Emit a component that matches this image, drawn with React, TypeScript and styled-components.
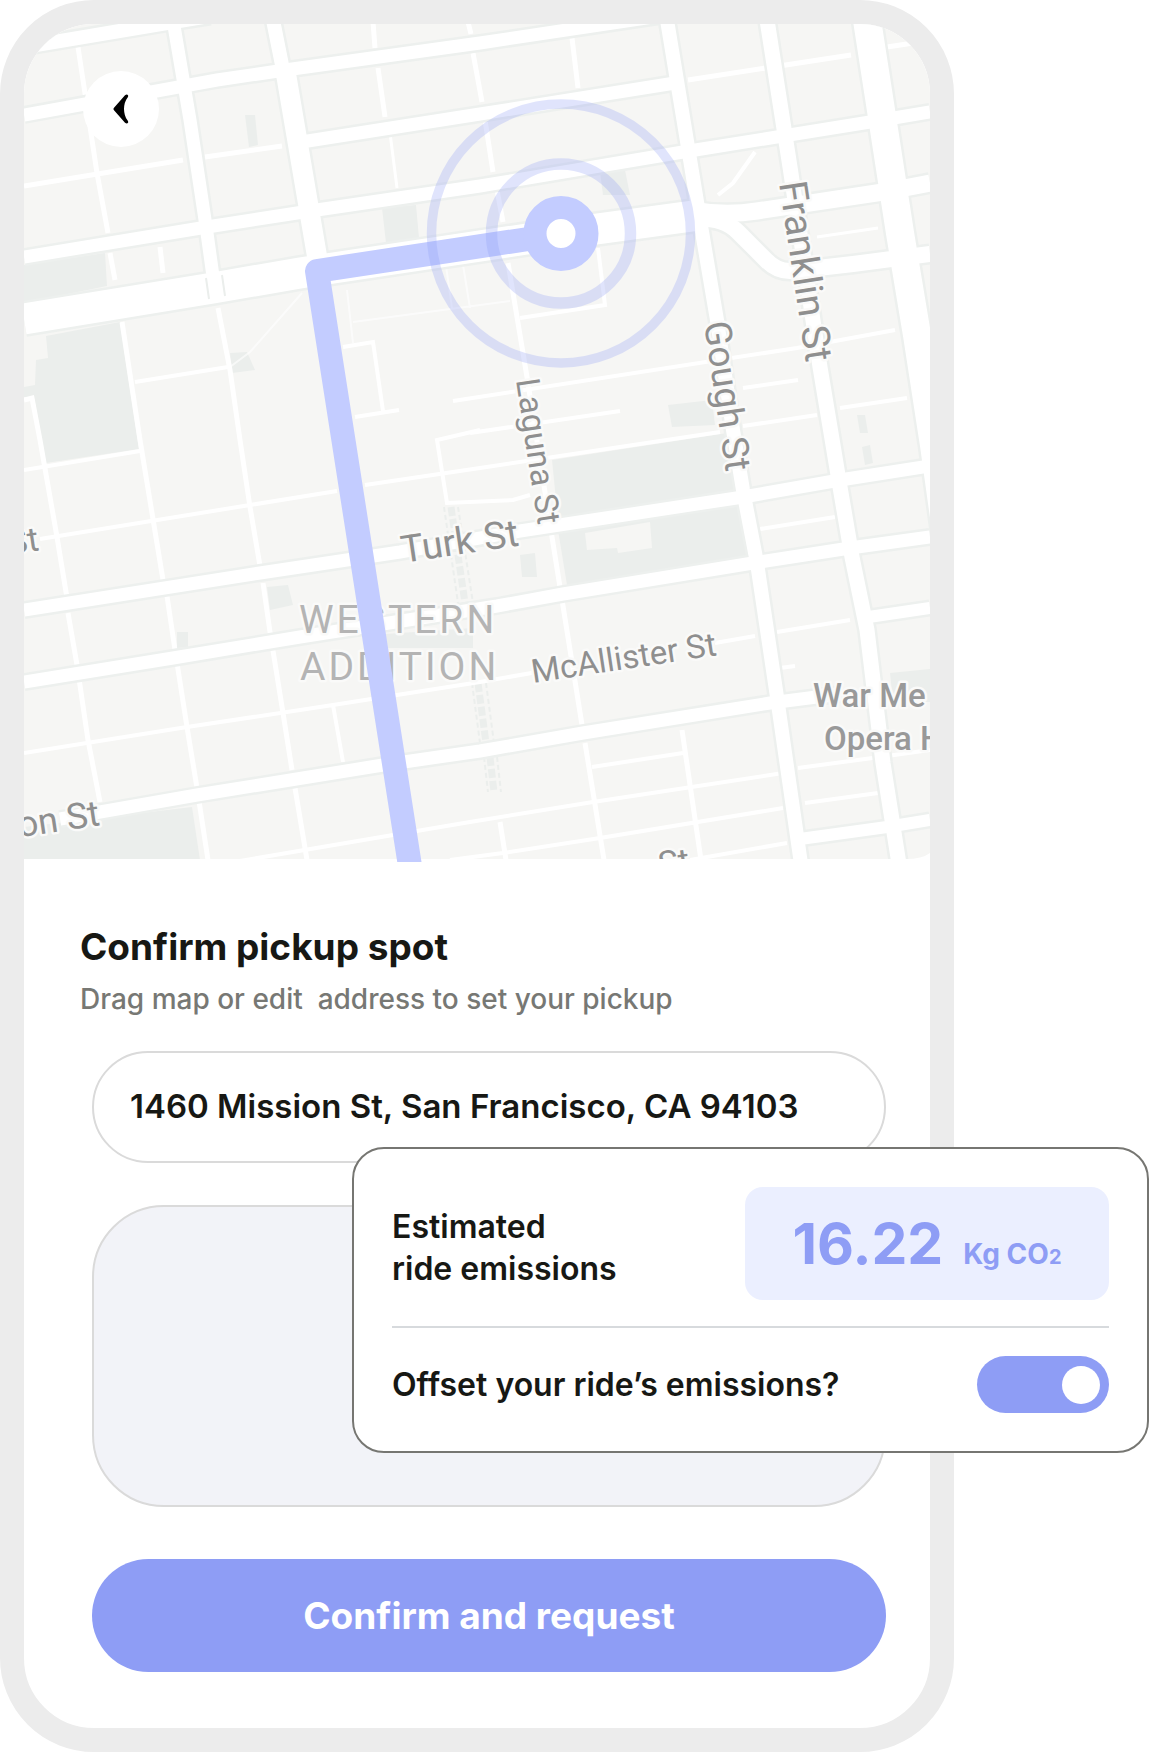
import React, { useState } from "react";
import styled, { createGlobalStyle } from "styled-components";

const color = {
  ink: "#171814",
  muted: "#777874",
  frame: "#ececec",
  line: "#dadada",
  panel: "#f2f3f8",
  accent: "#8e9df5",
  accentSoft: "#ebefff",
  route: "#c3ccff",
  land: "#f6f6f4",
  park: "#ebeeec",
};

const GlobalStyle = createGlobalStyle`
  *, *::before, *::after { box-sizing: border-box; }
  body { margin: 0; background: #fff; color: ${color.ink}; font-family: Inter, "Liberation Sans", sans-serif; }
  h1, p { margin: 0; }
`;

const Page = styled.main`
  padding-right: 196px;
`;

const Phone = styled.div`
  border: 24px solid ${color.frame};
  border-radius: 94px;
  background: #fff;
`;

const MapArea = styled.section`
  position: relative;
  border-radius: 70px 70px 0 0;
  overflow: hidden;
`;

const MapDrawing = styled.svg`
  display: block;
  width: 100%;
  height: auto;
`;

const BackButton = styled.button`
  position: absolute;
  left: 59px;
  top: 47px;
  width: 76px;
  height: 76px;
  display: flex;
  align-items: center;
  justify-content: center;
  padding: 0;
  border: 0;
  border-radius: 50%;
  background: #fff;
  cursor: pointer;
`;

const Heading = styled.header`
  display: flex;
  flex-direction: column;
  gap: 10px;
  padding: 61px 56px 0;
`;

const Title = styled.h1`
  font-size: 37px;
  line-height: 48px;
  font-weight: 700;
`;

const Hint = styled.label`
  font-size: 28px;
  line-height: 36px;
  font-weight: 500;
  color: ${color.muted};
  white-space: pre-wrap;
`;

const Form = styled.form`
  display: flex;
  flex-direction: column;
  padding: 34px 44px 56px 68px;
`;

const AddressInput = styled.input`
  width: 100%;
  height: 112px;
  padding: 0 36px 2px;
  border: 2px solid ${color.line};
  border-radius: 57px;
  background: #fff;
  color: inherit;
  font: 600 33px/42px Inter, "Liberation Sans", sans-serif;
`;

const Panel = styled.div`
  position: relative;
  height: 302px;
  margin: 42px 0 52px;
  border: 2px solid ${color.line};
  border-radius: 72px;
  background: ${color.panel};
`;

const SubmitButton = styled.button`
  height: 113px;
  border: 0;
  border-radius: 57px;
  background: ${color.accent};
  color: #fff;
  font: 700 37px/48px Inter, "Liberation Sans", sans-serif;
  cursor: pointer;
`;

const Card = styled.div`
  position: absolute;
  left: 258px;
  right: -265px;
  top: -60px;
  padding: 38px;
  border: 2px solid #767672;
  border-radius: 32px;
  background: #fff;
`;

const CardRow = styled.div<{ $divided?: boolean }>`
  display: flex;
  align-items: center;
  justify-content: space-between;
  padding: ${(p) => (p.$divided ? "0 0 26px" : "28px 0 0")};
  border-bottom: ${(p) => (p.$divided ? "2px solid #d7dadd" : "0")};
`;

const CardLabel = styled.label<{ $stacked?: boolean }>`
  padding-top: ${(p) => (p.$stacked ? "8px" : "0")};
  font-size: 32px;
  line-height: 42px;
  font-weight: 600;
`;

const Amount = styled.output`
  display: flex;
  align-items: center;
  justify-content: center;
  width: 364px;
  height: 113px;
  border-radius: 18px;
  background: ${color.accentSoft};
  color: ${color.accent};
`;

const AmountText = styled.span`
  display: flex;
  align-items: baseline;
  gap: 20px;
`;

const Value = styled.span`
  font-size: 57px;
  line-height: 64px;
  font-weight: 700;
`;

const Unit = styled.span`
  font-size: 28px;
  line-height: 36px;
  font-weight: 700;

  sub {
    font-size: 20px;
    line-height: 0;
    vertical-align: baseline;
  }
`;

const Switch = styled.input`
  appearance: none;
  display: flex;
  align-items: center;
  width: 132px;
  height: 57px;
  margin: 0;
  padding: 0 9px;
  border-radius: 29px;
  background: #c9cbd3;
  cursor: pointer;

  &::before {
    content: "";
    width: 38px;
    height: 38px;
    border-radius: 50%;
    background: #fff;
  }

  &:checked {
    justify-content: flex-end;
    background: ${color.accent};
  }
`;

const StreetName = styled.text`
  font-family: Roboto, "Liberation Sans", sans-serif;
  fill: #8f8f8f;
  stroke: #fafaf9;
  stroke-width: 5px;
  stroke-linejoin: round;
  paint-order: stroke;
`;

const DistrictName = styled(StreetName)`
  font-size: 39px;
  font-weight: 400;
  letter-spacing: 3px;
  fill: #b4b4b4;
`;

const PlaceName = styled(StreetName)`
  font-size: 33px;
  font-weight: 500;
  fill: #999;
`;

const parks = [
  "M24 265L105 253L107 286L24 303Z",
  "M46 336L120 322L139 449L46 463L34 397H24V387L35 385L36 360L48 358Z",
  "M24 827L192 807L200 860H24Z",
  "M552 460L727 433L735 490L558 520Z",
  "M558 530L738 503L747 558L567 585Z",
  "M382 208L416 205L419 238L386 243Z",
  "M245 115H255L258 145L249 147Z",
  "M230 353L247 352L255 370L232 373Z",
  "M600 172L625 170L630 195H603Z",
  "M668 405L712 400L715 425L672 427Z",
  "M857 415H865L868 433H860Z",
  "M862 447L870 445L873 463L865 465Z",
  "M267 587L288 585L293 605L270 610Z",
  "M177 632H188V647L177 648Z",
  "M520 555L535 553L537 577H522Z",
  "M890 673L930 669V702H893Z",
  "M385 634L473 628V648H388Z",
];

const roads: { d: string; w: number }[] = [
  { w: 14, d: "M24 47L167 23L210 16" },
  { w: 13, d: "M24 115L217 80L285 70L480 43L660 16" },
  { w: 13, d: "M295 143L480 114L675 83" },
  { w: 13, d: "M24 257L207 227L310 211L480 186L683 152L870 122L930 112" },
  { w: 31, d: "M24 319L213 288L300 273L560 234L700 215" },
  { w: 17, d: "M690 210Q725 216 757 211L883 192L930 183" },
  { w: 16, d: "M690 219Q722 216 738 232L766 260Q777 272 792 271L853 264L930 254" },
  { w: 13, d: "M24 610L260 573L400 552L520 531L743 497L840 480L930 466" },
  { w: 13, d: "M24 682L173 658L300 637L497 606L563 594L753 563L850 548L930 537" },
  { w: 12, d: "M862 618L930 608" },
  { w: 13, d: "M60 819L100 812L197 795L383 765L480 751L583 733L770 703L840 694" },
  { w: 12, d: "M800 839L887 827L930 820" },
  { w: 13, d: "M173 20L190 120L207 233L216 298" },
  { w: 14, d: "M273 20L285 80" },
  { w: 20, d: "M286 74L310 215L318 262" },
  { w: 14, d: "M667 20L683 117L700 220L717 320L733 430L743 490L757 563L777 697L801 864" },
  { w: 15, d: "M767 20L790 167L820 367L840 487L852 557L867 630L883 763L899 864" },
  { w: 28, d: "M867 20L883 123L900 233L917 335L934 445L950 560" },
];

const lanes: { d: string; w: number }[] = [
  { w: 5, d: "M24 186L183 160M205 157L282 146M688 80L851 55M887 47L920 42" },
  { w: 5, d: "M78 47L97 173L108 233M110 253L115 280M160 247L163 273" },
  { w: 5, d: "M218 308L230 370L240 440L250 507L260 566M263 583L270 632L283 713L292 770M295 788L307 860" },
  { w: 5, d: "M122 322L140 440L152 513L163 580M167 596L175 650L187 727L197 788L208 860" },
  { w: 5, d: "M24 400L32 398L40 440L57 537L67 598M68 613L77 665L88 740L100 802" },
  { w: 4, d: "M24 470L140 451M40 539L250 505L337 491M365 485L480 468L720 432M743 426L817 415M840 408L907 398" },
  { w: 4, d: "M135 382L228 367" },
  { w: 5, d: "M373 22L375 48M378 68L385 117M468 22L471 34M473 53L482 102M485 120L493 172M497 190L503 222M572 38L578 88" },
  { w: 3, d: "M390 133L397 188M878 228L817 237" },
  { w: 5, d: "M508 263L527 377L552 537L582 725M585 743L604 860M682 730L701 860M500 822L506 860" },
  { w: 4, d: "M598 248L605 305L520 318M755 152L733 183L718 195" },
  { w: 4, d: "M343 347L373 342L383 411M355 417L399 410" },
  { w: 4, d: "M453 401L797 348L895 330M470 433L620 411M743 388L798 380" },
  { w: 4, d: "M480 430L437 440L447 503L513 500L530 495" },
  { w: 4, d: "M760 529L835 517M780 668L795 666M715 643L755 636M777 632L850 620M857 619L910 610" },
  { w: 4, d: "M24 753L187 727L333 705L480 682L560 668M333 705L343 762" },
  { w: 4, d: "M240 861L393 835L470 822L593 802L783 773M798 768L880 757L930 750" },
  { w: 4, d: "M450 860L503 853L600 838L783 808M805 803L878 793M690 860L787 843M592 767L683 753" },
];

function MapView() {
  return (
    <MapDrawing viewBox="24 24 906 838" role="img" aria-label="Map of the pickup spot near Laguna St">
      <defs>
        <clipPath id="map-tiles">
          <path d="M24 24H930V853Q922 859 906 859H24Z" />
        </clipPath>
      </defs>
      <g clipPath="url(#map-tiles)">
        <rect x="24" y="24" width="906" height="838" fill={color.land} />
        {parks.map((d) => (
          <path key={d} d={d} fill={color.park} />
        ))}
        <path d="M585 533L650 522L652 548L618 553L617 548L587 550Z" fill={color.land} />
        <g fill="none" stroke={color.park}>
          <path strokeWidth="7" strokeDasharray="9 3" d="M451 507L465 603M478 683L486 743M490 757L494 792" />
          <path strokeWidth="2" strokeDasharray="5 3" d="M444 507L458 603M458 507L473 603M472 683L480 743M486 683L494 743M484 757L488 792M497 757L501 792" />
        </g>
        <g fill="none" stroke="#fff" strokeWidth="2" opacity="0.6">
          <path d="M302 293L250 352L230 367M347 290L353 343M353 322L510 301M463 265L470 308M446 266L452 308" />
        </g>
        <g fill="none" stroke="#fff">
          {lanes.map((l) => (
            <path key={l.d} d={l.d} strokeWidth={l.w} />
          ))}
        </g>
        <g fill="none" stroke="#edf0ee">
          {roads.map((r) => (
            <path key={r.d} d={r.d} strokeWidth={r.w + 5} />
          ))}
        </g>
        <g fill="none" stroke="#fff">
          {roads.map((r) => (
            <path key={r.d} d={r.d} strokeWidth={r.w} />
          ))}
        </g>
        <path d="M206 278L209 299M222 275L225 296" stroke={color.park} strokeWidth="2" />
        <StreetName fontSize="38" transform="translate(403 563) rotate(-8.6)">Turk St</StreetName>
        <StreetName fontSize="33" transform="translate(533 683) rotate(-8.6)">McAllister St</StreetName>
        <StreetName fontSize="33" transform="translate(516 380) rotate(81.4)">Laguna St</StreetName>
        <StreetName fontSize="37" transform="translate(704 323) rotate(81.6)">Gough St</StreetName>
        <StreetName fontSize="39" transform="translate(779 183) rotate(81.4)">Franklin St</StreetName>
        <StreetName fontSize="36" textAnchor="end" transform="translate(101 825) rotate(-8.6)">on St</StreetName>
        <StreetName fontSize="34" textAnchor="end" transform="translate(40 550) rotate(-8.6)">St</StreetName>
        <StreetName fontSize="34" transform="translate(660 876) rotate(-8.6)">St</StreetName>
        <DistrictName x="299" y="633">WESTERN</DistrictName>
        <DistrictName x="300" y="680">ADDITION</DistrictName>
        <PlaceName x="813" y="707">War Me</PlaceName>
        <PlaceName x="824" y="750">Opera H</PlaceName>
      </g>
      <path d="M561 234L317 271L410 866" fill="none" stroke={color.route} strokeWidth="24" strokeLinejoin="round" />
      <g fill="none" stroke={color.accent} opacity="0.27">
        <circle cx="561" cy="233.5" r="129.5" strokeWidth="9.5" />
        <circle cx="561" cy="233.5" r="69.5" strokeWidth="11.5" />
      </g>
      <circle cx="561" cy="233.5" r="26" fill="#fff" stroke={color.route} strokeWidth="23" />
    </MapDrawing>
  );
}

export default function App() {
  const [address, setAddress] = useState("1460 Mission St, San Francisco, CA 94103");
  const [offset, setOffset] = useState(true);

  return (
    <>
      <GlobalStyle />
      <Page>
        <Phone>
          <MapArea>
            <MapView />
            <BackButton type="button" aria-label="Back">
              <svg width="16" height="30" viewBox="0 0 16 30" aria-hidden="true">
                <path d="M12 1.2Q14-.2 15 1.2Q15.600 2.500 14.300 4Q11.200 8 11 15Q11.200 22 14.300 26Q15.600 27.500 15 28.800Q14 30.200 12 28.800L.8 16Q.2 15 .8 14Z" />
              </svg>
            </BackButton>
          </MapArea>
          <Heading>
            <Title>Confirm pickup spot</Title>
            <Hint htmlFor="address">{"Drag map or edit  address to set your pickup"}</Hint>
          </Heading>
          <Form onSubmit={(e) => e.preventDefault()}>
            <AddressInput id="address" type="text" value={address} onChange={(e) => setAddress(e.target.value)} />
            <Panel>
              <Card>
                <CardRow $divided>
                  <CardLabel $stacked htmlFor="emissions">
                    Estimated
                    <br />
                    ride emissions
                  </CardLabel>
                  <Amount id="emissions">
                    <AmountText>
                      <Value>16.22</Value>
                      <Unit>
                        Kg CO<sub>2</sub>
                      </Unit>
                    </AmountText>
                  </Amount>
                </CardRow>
                <CardRow>
                  <CardLabel htmlFor="offset">Offset your ride’s emissions?</CardLabel>
                  <Switch
                    id="offset"
                    type="checkbox"
                    role="switch"
                    checked={offset}
                    onChange={(e) => setOffset(e.target.checked)}
                  />
                </CardRow>
              </Card>
            </Panel>
            <SubmitButton type="submit">Confirm and request</SubmitButton>
          </Form>
        </Phone>
      </Page>
    </>
  );
}
